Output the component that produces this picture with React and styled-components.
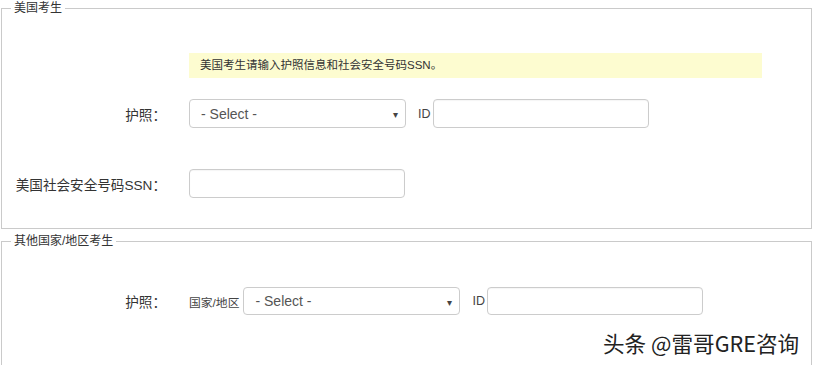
import styled, { createGlobalStyle } from 'styled-components';

const GlobalStyle = createGlobalStyle`
  html, body {
    margin: 0;
    padding: 0;
    background: #ffffff;
  }
  body {
    font-family: "Liberation Sans", "Noto Sans CJK SC", sans-serif;
    color: #333333;
    overflow: hidden;
  }
`;

const Page = styled.div`
  position: relative;
  width: 813px;
  height: 365px;
  overflow: hidden;
`;

const Fieldset = styled.fieldset`
  box-sizing: border-box;
  width: 811px;
  margin: ${(p) => p.$top || 0}px 0 0 1px;
  padding: 0 0 ${(p) => p.$bottom}px 0;
  border: 1px solid #cacaca;
  min-width: 0;
`;

const Legend = styled.legend`
  margin-left: 9px;
  padding: 0 3px;
  font-size: 12px;
  line-height: 16px;
  color: #333333;
`;

const Row = styled.div`
  display: grid;
  grid-template-columns: 164px 1fr;
  column-gap: 23px;
  align-items: center;
  margin-top: ${(p) => p.$top}px;
`;

const Label = styled.div`
  text-align: right;
  font-size: 13.6px;
  color: #333333;
  white-space: nowrap;
`;

const Controls = styled.div`
  display: flex;
  align-items: center;
`;

const Notice = styled.div`
  width: 573px;
  box-sizing: border-box;
  height: 25px;
  line-height: 25px;
  padding: 0 11px;
  background: #fdfcd0;
  font-size: 11.5px;
  color: #333333;
`;

const SmallLabel = styled.span`
  font-size: ${(p) => p.$size || 11.8}px;
  color: #444444;
  margin-right: ${(p) => p.$gap || 0}px;
  margin-left: ${(p) => p.$left || 0}px;
`;

const SelectBox = styled.div`
  box-sizing: border-box;
  width: 217px;
  height: ${(p) => p.$h}px;
  border: 1px solid #cccccc;
  border-radius: 4px;
  display: flex;
  align-items: center;
  justify-content: space-between;
  padding: 0 7px 0 11px;
  font-size: 14px;
  color: #555555;
  background: #ffffff;
`;

const Arrow = styled.span`
  font-size: 10px;
  color: #444444;
  padding-top: 2px;
`;

const TextInput = styled.div`
  box-sizing: border-box;
  width: 216px;
  height: ${(p) => p.$h}px;
  border: 1px solid #cccccc;
  border-radius: 4px;
  background: #ffffff;
  box-shadow: inset 0 1px 1px rgba(0, 0, 0, 0.04);
`;

const Watermark = styled.div`
  position: absolute;
  left: 603px;
  top: 329px;
  font-size: 21.6px;
  line-height: 28px;
  color: #222222;
  font-family: "Noto Sans CJK SC", "Liberation Sans", sans-serif;
  text-shadow: 0 0 2px #ffffff, 1px 1px 0 #ffffff;
`;

const Select = ({ h }) => (
  <SelectBox $h={h}>
    <span>- Select -</span>
    <Arrow>▾</Arrow>
  </SelectBox>
);

const App = () => (
  <Page>
    <GlobalStyle />
    <Fieldset $bottom={30}>
      <Legend>美国考生</Legend>
      <Row $top={37}>
        <span />
        <Notice>美国考生请输入护照信息和社会安全号码SSN。</Notice>
      </Row>
      <Row $top={21}>
        <Label>护照：</Label>
        <Controls>
          <Select h={29} />
          <SmallLabel $size={12.5} $left={12} $gap={2}>ID</SmallLabel>
          <TextInput $h={29} />
        </Controls>
      </Row>
      <Row $top={41}>
        <Label>美国社会安全号码SSN：</Label>
        <Controls>
          <TextInput $h={29} />
        </Controls>
      </Row>
    </Fieldset>
    <Fieldset $top={4} $bottom={80}>
      <Legend>其他国家/地区考生</Legend>
      <Row $top={38}>
        <Label>护照：</Label>
        <Controls>
          <SmallLabel $gap={4}>国家/地区</SmallLabel>
          <Select h={28} />
          <SmallLabel $size={12.5} $left={12} $gap={2}>ID</SmallLabel>
          <TextInput $h={28} />
        </Controls>
      </Row>
    </Fieldset>
    <Watermark>头条 @雷哥GRE咨询</Watermark>
  </Page>
);

export default App;
